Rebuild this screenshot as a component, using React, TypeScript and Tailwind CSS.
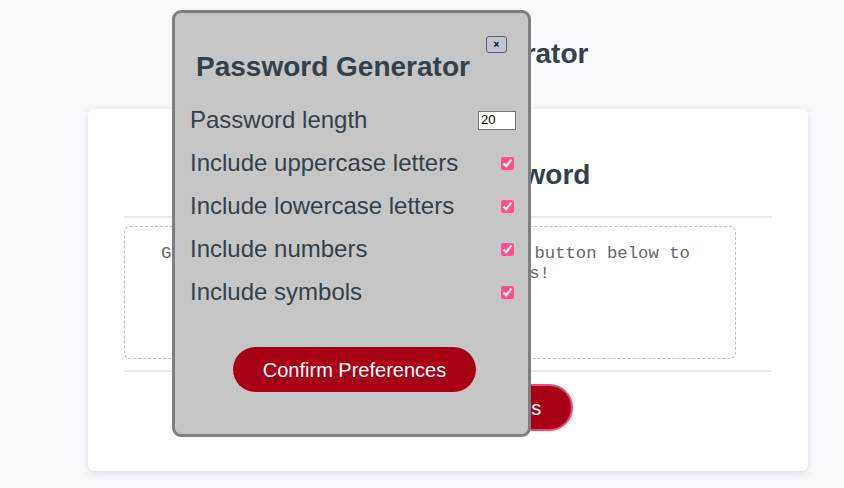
import { useState } from 'react';

const rows = [
  { label: 'Include uppercase letters', key: 'upper' },
  { label: 'Include lowercase letters', key: 'lower' },
  { label: 'Include numbers', key: 'numbers' },
  { label: 'Include symbols', key: 'symbols' },
];

function PrefsModal() {
  const [length, setLength] = useState('20');
  const [checked, setChecked] = useState<Record<string, boolean>>({
    upper: true,
    lower: true,
    numbers: true,
    symbols: true,
  });

  return (
    <div className="absolute left-[172px] top-[10px] w-[359px] h-[427px] bg-[#c6c6c6] border-[3px] border-[#7f7f7f] rounded-[9px] flex flex-col">
      <button className="absolute right-[21px] top-[23px] w-[21px] h-[17px] flex items-center justify-center rounded-[3px] border border-[#5d626e] bg-[#c2c6d2] text-[10px] font-bold leading-none text-black">
        ×
      </button>

      <h2 className="pl-[21px] pt-[38px] text-[28px] leading-[32px] font-bold text-[#34414b]">
        Password Generator
      </h2>

      <div className="mt-[22px] pr-[12px] pl-[15px] flex flex-col">
        <div className="h-[30px] flex items-center justify-between">
          <span className="text-[24px] text-[#34414b]">Password length</span>
          <input
            type="text"
            value={length}
            onChange={(e) => setLength(e.target.value)}
            className="w-[38px] h-[19px] bg-white border border-[#767676] px-[2px] text-[13px] text-black outline-none"
          />
        </div>
        {rows.map((row) => (
          <div key={row.key} className="h-[30px] mt-[13px] flex items-center justify-between pr-[2px]">
            <span className="text-[24px] text-[#34414b]">{row.label}</span>
            <input
              type="checkbox"
              checked={checked[row.key]}
              onChange={() => setChecked({ ...checked, [row.key]: !checked[row.key] })}
              className="w-[13px] h-[13px] accent-[#ff4f8f]"
            />
          </div>
        ))}
      </div>

      <div className="mt-[40px] flex justify-center pl-[6px]">
        <button className="w-[243px] h-[45px] rounded-full bg-[#a80014] text-white text-[20px]">
          Confirm Preferences
        </button>
      </div>
    </div>
  );
}

export default function App() {
  return (
    <div className="relative min-h-screen bg-[#f8f9fc] font-['Liberation_Sans',Arial,sans-serif] pt-[38px]">
      <h1 className="ml-[88px] w-[720px] pl-[7px] text-center text-[28px] leading-[32px] font-bold text-[#34414b]">
        Password Generator
      </h1>

      <div className="mt-[39px] ml-[88px] w-[720px] bg-white rounded-[6px] shadow-[0_2px_8px_rgba(0,0,0,0.12)] px-[36px] pt-[50px] pb-[40px]">
        <h2 className="text-center text-[28px] leading-[32px] font-bold text-[#34414b]">Generate a Password</h2>
        <div className="mt-[25px] h-[2px] bg-[#e7e9eb]" />

        <div className="mt-[8px] w-[612px] h-[133px] border border-dashed border-[#b9bcc2] rounded-[6px] pt-[17px] pr-[9px] text-center font-['Liberation_Mono','Courier_New',monospace] text-[17.3px] leading-[20px] text-[#666666]">
          Generate a password? Just click the button below to
          <br />
          choose your preferences!
        </div>

        <div className="mt-[11px] h-[2px] bg-[#e7e9eb]" />

        <div className="mt-[12px] flex justify-center">
          <button className="w-[250px] h-[47px] rounded-full bg-[#a80014] border-2 border-[#f04c82] text-white text-[20px]">
            Generate Passwords
          </button>
        </div>
      </div>

      <PrefsModal />
    </div>
  );
}
